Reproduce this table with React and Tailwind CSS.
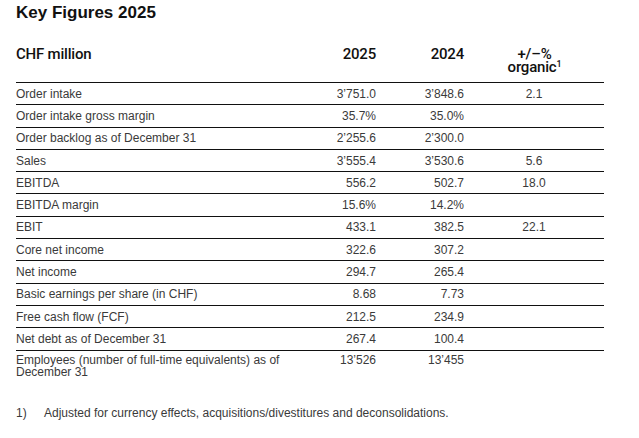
const rows = [
  ["Order intake", "3’751.0", "3’848.6", "2.1"],
  ["Order intake gross margin", "35.7%", "35.0%", ""],
  ["Order backlog as of December 31", "2’255.6", "2’300.0", ""],
  ["Sales", "3’555.4", "3’530.6", "5.6"],
  ["EBITDA", "556.2", "502.7", "18.0"],
  ["EBITDA margin", "15.6%", "14.2%", ""],
  ["EBIT", "433.1", "382.5", "22.1"],
  ["Core net income", "322.6", "307.2", ""],
  ["Net income", "294.7", "265.4", ""],
  ["Basic earnings per share (in CHF)", "8.68", "7.73", ""],
  ["Free cash flow (FCF)", "212.5", "234.9", ""],
  ["Net debt as of December 31", "267.4", "100.4", ""],
]

const cols = "grid grid-cols-[280px_80px_88px_140px]"

export default function App() {
  return (
    <div className="w-[639px] h-[438px] bg-white px-4 pt-[3px] font-['Liberation_Sans',Arial,sans-serif] text-[#3a3a3a]">
      <h1 className="text-[17px] leading-5 font-bold text-[#111]">Key Figures 2025</h1>

      <div className="w-[588px] mt-[25px]">
        {/* Header */}
        <div className={`${cols} h-[35px] border-b border-[#111] font-['Roboto',Arial,sans-serif] text-[15px] leading-[13px] font-medium tracking-[-0.2px] text-[#111]`}>
          <div>CHF million</div>
          <div className="text-right">2025</div>
          <div className="text-right">2024</div>
          <div className="text-center pl-[1px]">
            <div>+/–%</div>
            <div>
              organic<span className="relative -top-[5px] text-[9px]">1</span>
            </div>
          </div>
        </div>

        {/* Body */}
        {rows.map(([label, a, b, c]) => (
          <div key={label} className={`${cols} h-[22.3px] items-center border-b border-[#111] text-[12px] leading-[14px]`}>
            <div>{label}</div>
            <div className="text-right">{a}</div>
            <div className="text-right">{b}</div>
            <div className="text-center">{c}</div>
          </div>
        ))}
        <div className={`${cols} pt-[3px] text-[12px] leading-[12px]`}>
          <div>Employees (number of full-time equivalents) as of December 31</div>
          <div className="text-right">13’526</div>
          <div className="text-right">13’455</div>
          <div />
        </div>
      </div>

      {/* Footnote */}
      <div className="flex mt-[28px] text-[12px] leading-[14px]">
        <span className="w-[28px]">1)</span>
        <span>Adjusted for currency effects, acquisitions/divestitures and deconsolidations.</span>
      </div>
    </div>
  )
}
